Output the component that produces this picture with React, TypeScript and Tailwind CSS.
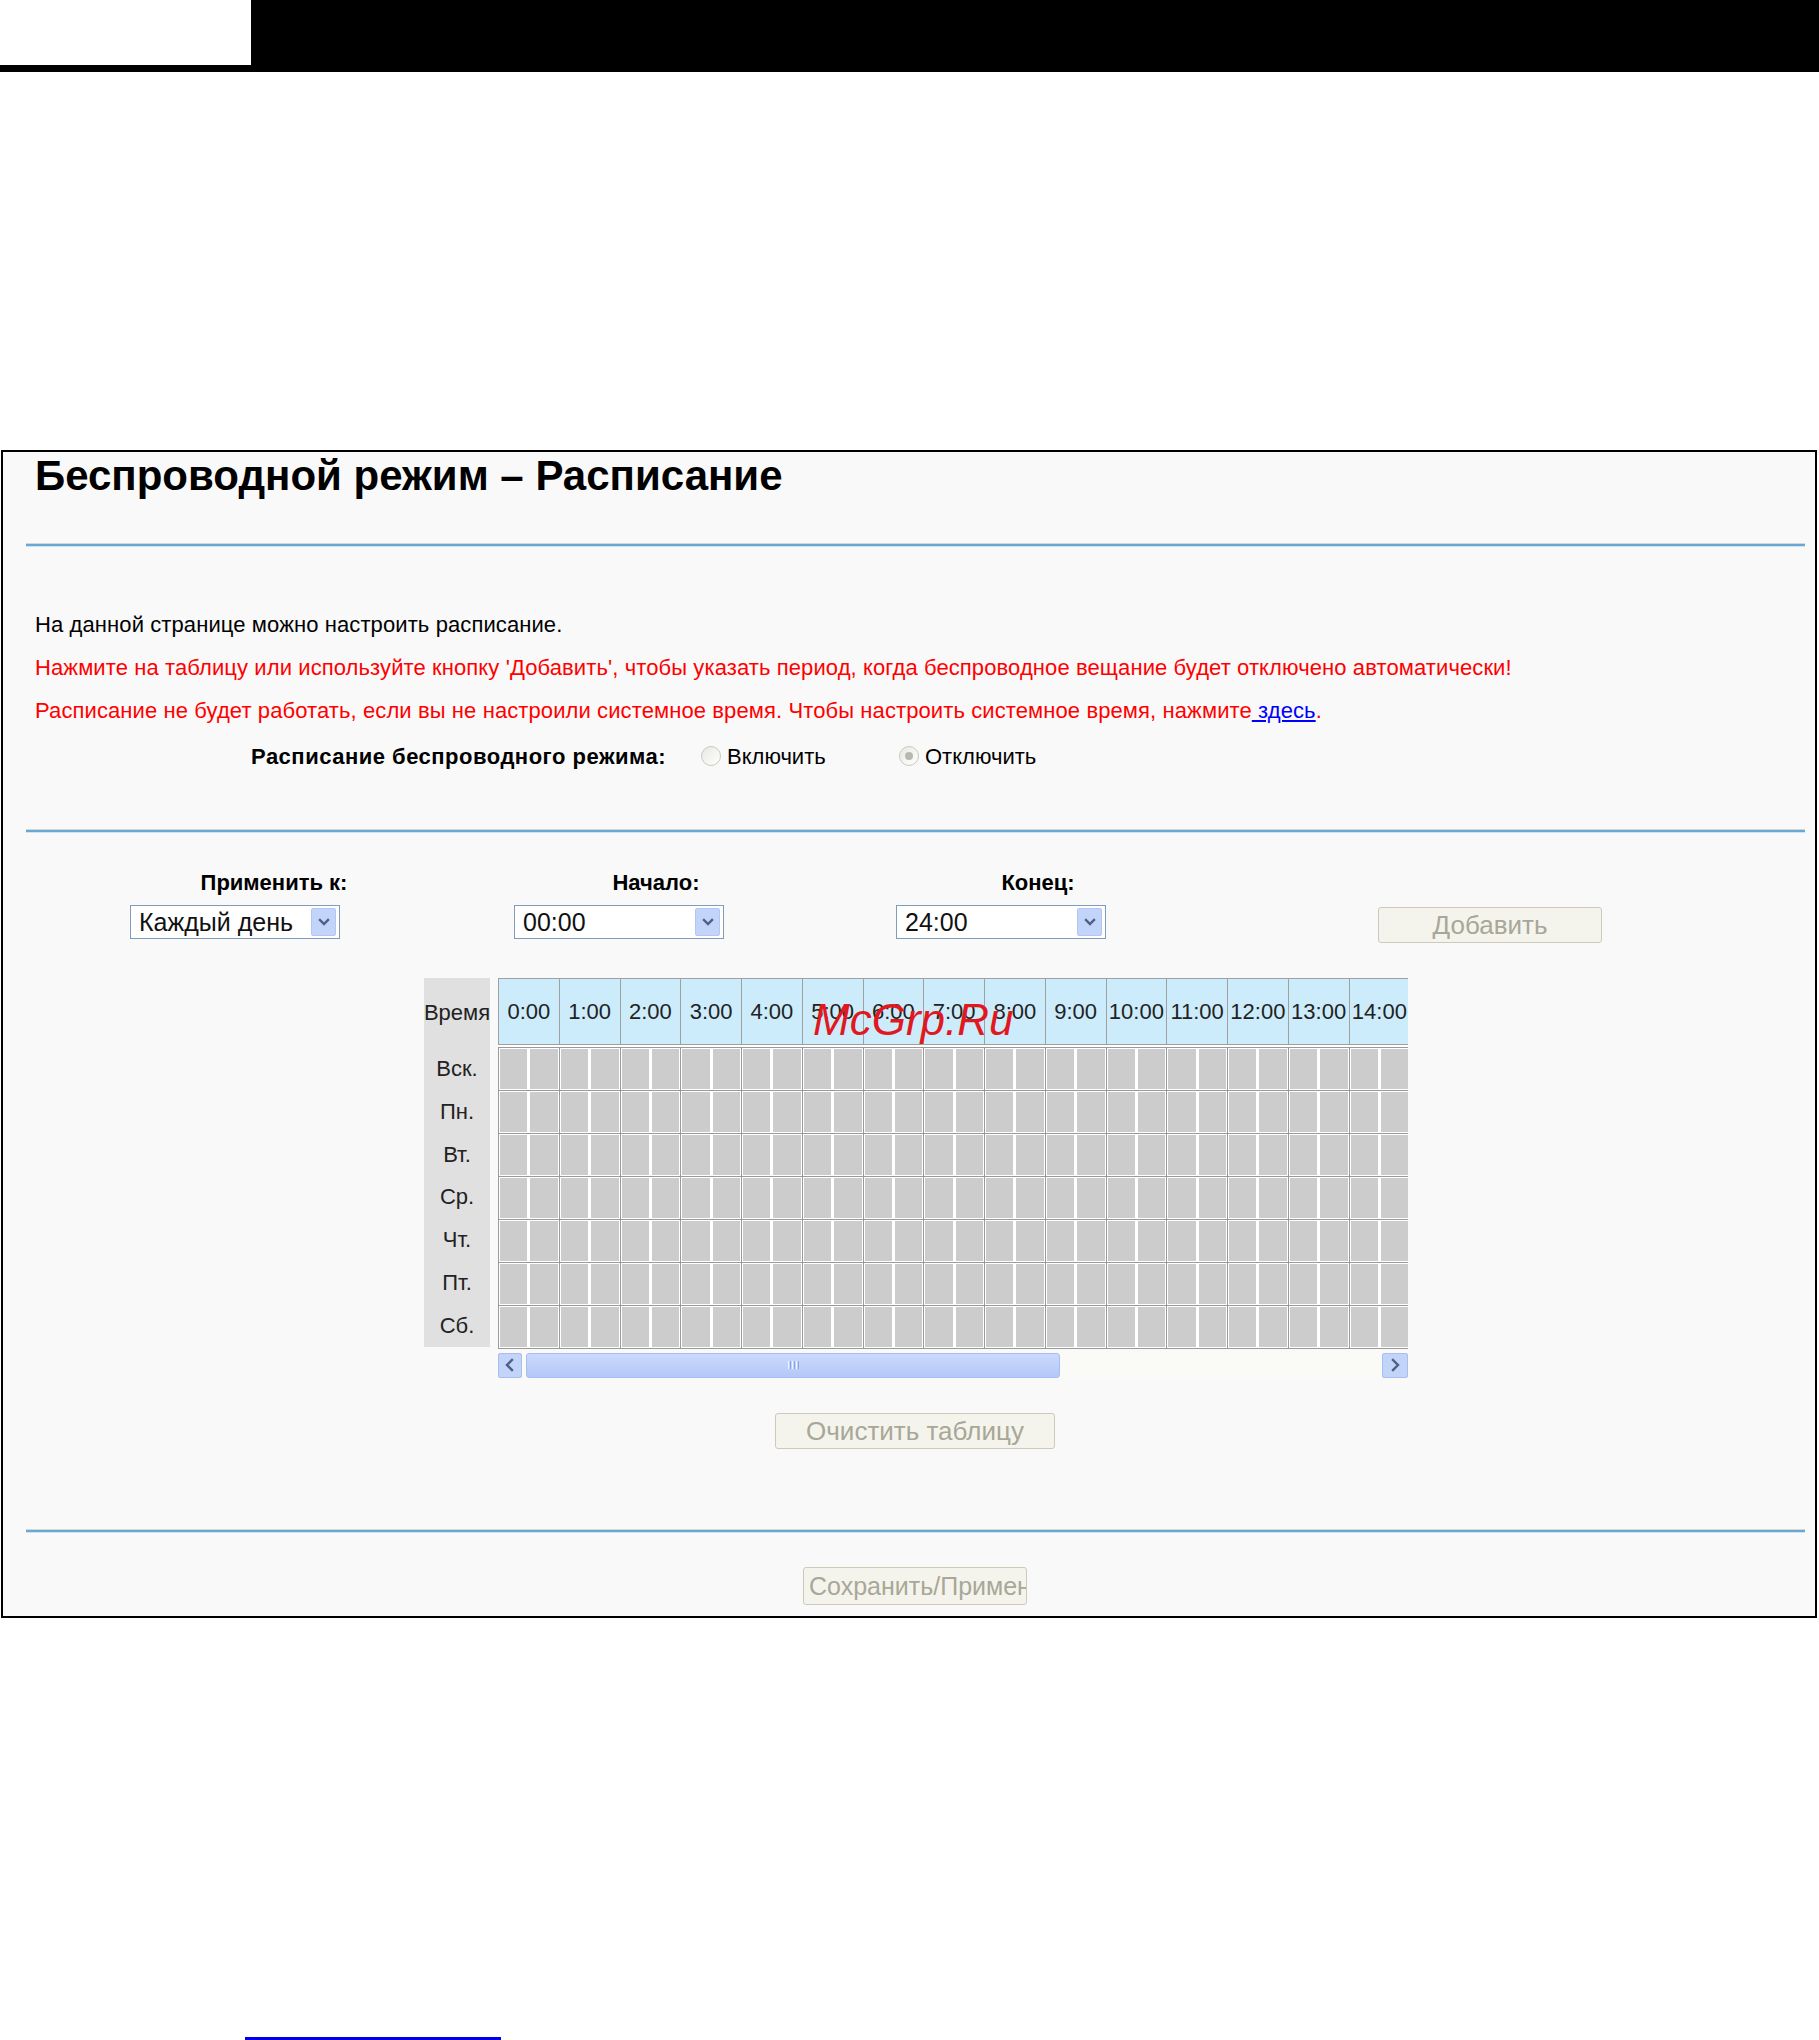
import React from "react";

const hours = Array.from({ length: 24 }, (_, i) => `${i}:00`);
const days = ["Вск.", "Пн.", "Вт.", "Ср.", "Чт.", "Пт.", "Сб."];

function Hr() {
  return (
    <div className="ml-[23px] mr-[10px] flex flex-col">
      <div className="h-[1px] bg-[#d6d6d6]" />
      <div className="h-[2px] bg-[#6aa8d4]" />
      <div className="h-[1px] bg-[#cfe4f2]" />
    </div>
  );
}

function Chevron({ dir }: { dir: "down" | "left" | "right" }) {
  const d =
    dir === "down" ? "M3 5 L7 9 L11 5" : dir === "left" ? "M9 2 L4 7 L9 12" : "M5 2 L10 7 L5 12";
  return (
    <svg width="14" height="14" viewBox="0 0 14 14">
      <path d={d} fill="none" stroke="#4d6185" strokeWidth="2.4" strokeLinecap="square" />
    </svg>
  );
}

function Select({ value }: { value: string }) {
  return (
    <div className="w-[210px] h-[34px] border border-[#7f9db9] bg-white flex items-center justify-between pl-[8px] pr-[3px]">
      <span className="text-[25px] leading-none text-[#111]">{value}</span>
      <div className="w-[25px] h-[28px] rounded-[2px] bg-[#c3d4fb] border border-[#b4c7f3] flex items-center justify-center">
        <Chevron dir="down" />
      </div>
    </div>
  );
}

function Radio({ checked }: { checked?: boolean }) {
  return (
    <div className="w-[20px] h-[20px] rounded-full border border-[#c9c9c0] bg-gradient-to-br from-[#e8e8e2] to-white flex items-center justify-center">
      {checked && <div className="w-[8px] h-[8px] rounded-full bg-[#b8b8b0]" />}
    </div>
  );
}

export default function App() {
  return (
    <div className="w-[1819px] h-[2040px] bg-white font-['Liberation_Sans',Arial,sans-serif] text-black flex flex-col">
      <div className="h-[72px] bg-black shrink-0">
        <div className="w-[251px] h-[65px] bg-white" />
      </div>

      <div className="mt-[378px] ml-[1px] w-[1816px] h-[1168px] shrink-0 border-2 border-black bg-[#f9f9f9] flex flex-col">
        <div className="h-[48px] flex items-center pl-[32px]">
          <h1 className="text-[42px] font-bold leading-none">Беспроводной режим – Расписание</h1>
        </div>
        <div className="mt-[43px]">
          <Hr />
        </div>

        <div className="mt-[56px] pl-[32px] text-[22px] tracking-[0.1px]">
          <div className="h-[43px] flex items-center">На данной странице можно настроить расписание.</div>
          <div className="h-[43px] flex items-center text-[#ff0000]">
            Нажмите на таблицу или используйте кнопку 'Добавить', чтобы указать период, когда беспроводное вещание будет отключено автоматически!
          </div>
          <div className="h-[43px] flex items-center text-[#ff0000] whitespace-pre">
            <span>Расписание не будет работать, если вы не настроили системное время. Чтобы настроить системное время, нажмите</span>
            <span className="text-[#0000ff] underline"> здесь</span>
            <span>.</span>
          </div>
        </div>
        <div className="h-[48px] flex items-center text-[22px]">
          <div className="ml-[248px] w-[450px] font-bold tracking-[0.5px]">Расписание беспроводного режима:</div>
          <Radio />
          <span className="ml-[6px] w-[172px]">Включить</span>
          <Radio checked />
          <span className="ml-[6px]">Отключить</span>
        </div>

        <div className="mt-[49px]">
          <Hr />
        </div>

        <div className="mt-[34px] h-[30px] flex items-center text-[22px] font-bold">
          <div className="ml-[80px] w-[382px] text-center">Применить к:</div>
          <div className="w-[382px] text-center">Начало:</div>
          <div className="w-[382px] text-center">Конец:</div>
        </div>
        <div className="mt-[8px] flex items-start">
          <div className="ml-[127px] w-[384px]">
            <Select value="Каждый день" />
          </div>
          <div className="w-[382px]">
            <Select value="00:00" />
          </div>
          <div className="w-[482px]">
            <Select value="24:00" />
          </div>
          <button
            disabled
            className="mt-[2px] w-[224px] h-[36px] rounded-[3px] border border-[#cdcabb] bg-[#f4f4ec] text-[26px] leading-none text-[#a8a798]"
          >
            Добавить
          </button>
        </div>

        <div className="mt-[35px] ml-[421px] relative flex flex-col">
          <div className="flex">
            <div className="w-[66px] h-[369px] bg-[#e0e0e0] flex flex-col text-[22px] text-[#222]">
              <div className="h-[69px] flex items-center justify-center">Время</div>
              {days.map((d) => (
                <div key={d} className="h-[43px] flex items-center justify-center">
                  {d}
                </div>
              ))}
            </div>
            <div className="ml-[8px] w-[910px] overflow-hidden bg-white flex flex-col">
              <div className="flex h-[67px] border-t border-b border-l border-[#a0a0a0] w-max">
                {hours.map((h) => (
                  <div
                    key={h}
                    className="w-[60.75px] shrink-0 bg-[#ccecfc] border-r border-[#a0a0a0] flex items-center justify-center text-[22px] text-[#222]"
                  >
                    {h}
                  </div>
                ))}
              </div>
              <div className="mt-[2px] border-t border-l border-[#9a9a9a] w-max">
                {days.map((d) => (
                  <div key={d} className="flex h-[43px] border-b border-[#9a9a9a]">
                    {hours.map((h) => (
                      <div key={h} className="w-[60.75px] shrink-0 border-r border-[#9a9a9a] p-[1px] flex gap-[3px]">
                        <div className="flex-1 bg-[#cccccc]" />
                        <div className="flex-1 bg-[#cccccc]" />
                      </div>
                    ))}
                  </div>
                ))}
              </div>
            </div>
          </div>
          <div className="mt-[3px] ml-[74px] w-[910px] h-[26px] bg-[#fafaf7] flex items-center">
            <div className="w-[24px] h-[25px] rounded-[2px] bg-[#c3d4fb] border border-[#a9bdee] flex items-center justify-center">
              <Chevron dir="left" />
            </div>
            <div className="ml-[4px] w-[534px] h-[25px] rounded-[3px] border border-[#a9bdee] bg-gradient-to-b from-[#cbd9fc] to-[#b3c8f8] flex items-center justify-center gap-[1px]">
              <div className="w-[1px] h-[8px] bg-[#eef3ff]" />
              <div className="w-[1px] h-[8px] bg-[#8fa6dc]" />
              <div className="w-[1px] h-[8px] bg-[#eef3ff]" />
              <div className="w-[1px] h-[8px] bg-[#8fa6dc]" />
              <div className="w-[1px] h-[8px] bg-[#eef3ff]" />
              <div className="w-[1px] h-[8px] bg-[#8fa6dc]" />
            </div>
            <div className="ml-auto w-[26px] h-[25px] rounded-[2px] bg-[#c3d4fb] border border-[#a9bdee] flex items-center justify-center">
              <Chevron dir="right" />
            </div>
          </div>
          <div className="absolute left-[389px] top-[20px] text-[44px] leading-none italic text-[#e0191f] pointer-events-none">
            McGrp.Ru
          </div>
        </div>

        <div className="mt-[35px] ml-[772px]">
          <button
            disabled
            className="w-[280px] h-[36px] rounded-[3px] border border-[#cdcabb] bg-[#f4f4ec] text-[26px] leading-none text-[#a8a798]"
          >
            Очистить таблицу
          </button>
        </div>

        <div className="mt-[80px]">
          <Hr />
        </div>

        <div className="mt-[34px] ml-[800px]">
          <button
            disabled
            className="w-[224px] h-[38px] rounded-[3px] border border-[#cdcabb] bg-[#f4f4ec] text-[25px] leading-none text-[#a8a798] overflow-hidden whitespace-nowrap text-left pl-[5px]"
          >
            Сохранить/Применить
          </button>
        </div>
      </div>

      <div className="mt-[419px] ml-[245px] w-[256px] h-[3px] bg-[#0000ee] shrink-0" />
    </div>
  );
}
